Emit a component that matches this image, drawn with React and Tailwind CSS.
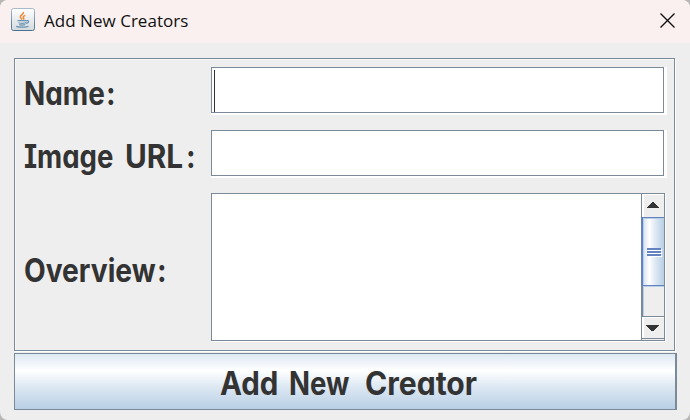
const comic =
  "font-['Inter',sans-serif] font-bold text-[32px] text-[#333333] whitespace-pre [font-feature-settings:'cv11','cv08'] leading-none";

function JavaIcon() {
  return (
    <svg width="24" height="24" viewBox="0 0 24 24" fill="none">
      <defs>
        <linearGradient id="tile" x1="0" y1="0" x2="0" y2="1">
          <stop offset="0" stopColor="#ffffff" />
          <stop offset="1" stopColor="#d3dade" />
        </linearGradient>
        <linearGradient id="rim" x1="0" y1="0" x2="0" y2="1">
          <stop offset="0" stopColor="#a9bac8" />
          <stop offset="1" stopColor="#49718f" />
        </linearGradient>
      </defs>
      <rect x="0.5" y="0.5" width="23" height="22" rx="2" fill="url(#tile)" stroke="url(#rim)" />
      <path d="M12.400 4c.8 2-3.400 3-3.100 4.900.1 1.200 1.200 1.700 1.800 2.600M14.300 7.400c-2.100.9-2.600 1.600-1.700 2.500.5.600.2 1.200-.4 1.600" stroke="#f08a35" strokeWidth="1.500" />
      <path d="M6.500 12.600h9M7.500 14.600c1 .9 6.500.9 7.800 0M8.300 16.600c1.200.7 4.800.7 6 0M15.500 12.800c3-.8 2.800 2.200-.4 2.600M5.200 18.400c3 .9 8.500.9 12.300-.1" stroke="#6b93b3" strokeWidth="1.200" />
    </svg>
  );
}

function Word({ width, scale, children }) {
  return (
    <span className={`block ${width}`}>
      <span className={`inline-block origin-left ${scale}`}>{children}</span>
    </span>
  );
}

function Field({ caret }) {
  return (
    <div className="h-[48px] w-[456px] bg-white">
      <div className="h-[46px] w-[453px] border border-[#7a8a99] pl-[2px] pt-[2px]">
        {caret && <div className="h-[42px] w-px bg-[#333333]" />}
      </div>
    </div>
  );
}

function Scrollbar() {
  return (
    <div className="flex w-[22px] flex-col bg-[#eeeeee]">
      <div className="flex h-[23px] items-start border-l-2 border-t border-white pl-[3px] pt-[7px]">
        <svg width="13" height="7" shapeRendering="crispEdges"><path d="M0 6h12v-1h-1v-1h-1v-1h-1v-1h-1v-1h-1v-1h-2v1h-1v1h-1v1h-1v1h-1v1h-1z" fill="#333333" /></svg>
      </div>
      <div className="-ml-px flex h-[69px] flex-col items-center justify-center gap-px border-y border-l-2 border-[#6382bf] bg-[linear-gradient(90deg,#d3e0ee,#ffffff_30%,#dce8f3_60%,#b8cfe5)] shadow-[inset_1px_1px_0_#b8cfe5]">
        <div className="h-[2px] w-[14px] bg-[#6382bf] shadow-[1px_1px_0_#ffffff]" />
        <div className="h-[2px] w-[14px] bg-[#6382bf] shadow-[1px_1px_0_#ffffff]" />
        <div className="h-[2px] w-[14px] bg-[#6382bf] shadow-[1px_1px_0_#ffffff]" />
      </div>
      <div className="-ml-px h-[30px] border-l-2 border-[#7a8a99] shadow-[inset_1px_1px_0_#b8cfe5]" />
      <div className="h-[23px] border-y border-[#7a8a99]">
        <div className="flex h-full border-l-2 border-t border-white pl-[2px] pt-[7px]">
          <svg width="13" height="7" shapeRendering="crispEdges"><path d="M0 0h13v1h-1v1h-1v1h-1v1h-1v1h-1v1h-3v-1h-1v-1h-1v-1h-1v-1h-1v-1h-1z" fill="#333333" /></svg>
        </div>
      </div>
    </div>
  );
}

export default function App() {
  return (
    <div className="h-[420px] w-[690px] overflow-hidden bg-[#b9b7b6]">
      <div className="h-full overflow-hidden rounded-[8px] bg-[#eeeeee]">
        <header className="flex h-[43px] items-start bg-[#f9f0ef] pl-[11px] pr-[15px]">
          <div className="mt-[8px]"><JavaIcon /></div>
          <h1 className="ml-[9px] mt-[9px] font-['Open_Sans',sans-serif] text-[17px] leading-[24px] tracking-[0.03px] text-[#111111]">Add New Creators</h1>
          <svg className="ml-auto mt-[13px]" width="15" height="15" viewBox="0 0 15 15"><path d="M.5.5l14 14M14.500.5l-14 14" stroke="#111111" strokeWidth="1.400" /></svg>
        </header>
        <main className="pl-[14px] pt-[15px]">
          <section className="h-[293px] w-[661px] border border-[#7a8a99] pl-[9px] pt-[8px] shadow-[inset_1px_1px_0_#f8f8f8,1px_1px_0_#ffffff]">
            <div className="flex items-start">
              <div className={`flex w-[187px] pt-[11px] ${comic}`}>
                <Word width="w-[82px]" scale="scale-x-[0.87]">Name</Word>
                <Word width="w-[12px]" scale="scale-x-[0.9]">:</Word>
              </div>
              <Field caret />
            </div>
            <div className="mt-[15px] flex items-start">
              <div className={`flex w-[187px] pt-[11px] ${comic}`}>
                <Word width="w-[101px]" scale="scale-x-[0.86]">Image</Word>
                <Word width="w-[61px]" scale="scale-x-[0.93]">URL</Word>
                <Word width="w-[12px]" scale="scale-x-[0.9]">:</Word>
              </div>
              <Field />
            </div>
            <div className="mt-[15px] flex items-start">
              <div className={`flex w-[187px] pt-[62px] ${comic}`}>
                <Word width="w-[133px]" scale="scale-x-[0.88]">Overview</Word>
                <Word width="w-[12px]" scale="scale-x-[0.9]">:</Word>
              </div>
              <div className="flex h-[148px] w-[454px] border border-[#7a8a99] bg-white shadow-[1px_1px_0_#ffffff]">
                <div className="w-[430px] border-r border-[#7a8a99]" />
                <Scrollbar />
              </div>
            </div>
          </section>
          <button className={`mt-[2px] flex h-[57px] w-[663px] border border-r-2 border-[#7a8a99] bg-[linear-gradient(180deg,#dde8f3,#ffffff_30%,#dde8f3_60%,#b8cfe5)] pl-[205px] pt-[14px] text-left ${comic}`}>
            <Word width="w-[69px]" scale="scale-x-[0.92]">Add</Word>
            <Word width="w-[76px]" scale="scale-x-[0.86]">New</Word>
            <Word width="w-[120px]" scale="scale-x-[0.94]">Creator</Word>
          </button>
        </main>
      </div>
    </div>
  );
}
